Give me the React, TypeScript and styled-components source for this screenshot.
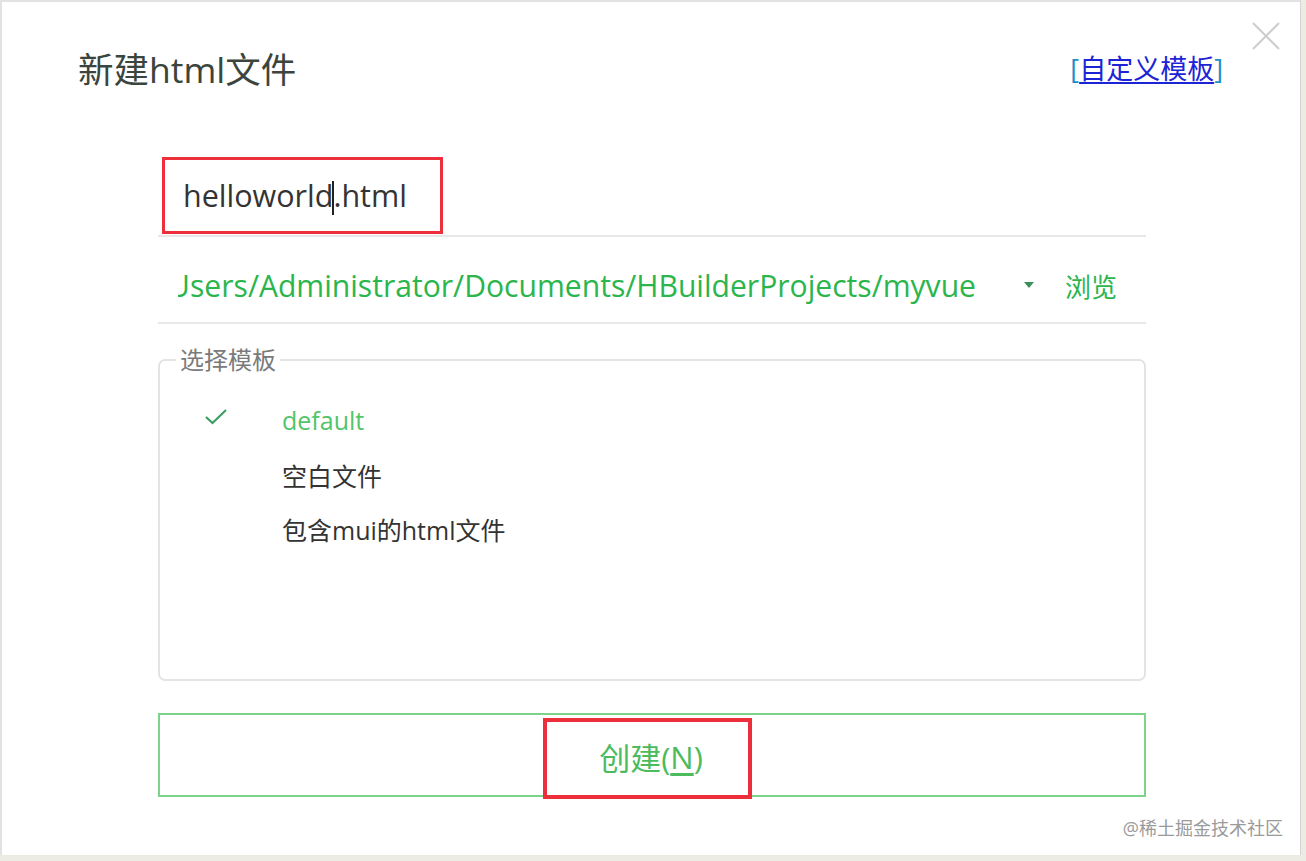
import styled, { createGlobalStyle } from 'styled-components'

const GlobalStyle = createGlobalStyle`
	html, body {
		margin: 0;
		padding: 0;
		background: #ecebe4;
	}
	body {
		font-family: "Open Sans", "Noto Sans CJK SC", sans-serif;
	}
`;

const templates = [
	{ name: 'default', selected: true },
	{ name: '空白文件', selected: false },
	{ name: '包含mui的html文件', selected: false },
]

const App = () => {

	return(
		<Page>
		<GlobalStyle />
		<Dialog>
			<CloseButton aria-label="close">
				<svg width="28" height="28" viewBox="0 0 28 28">
					<path d="M1 1 L27 27 M27 1 L1 27" stroke="#cdcdcd" strokeWidth="2" fill="none" />
				</svg>
			</CloseButton>
			<Header>
				<Title>新建html文件</Title>
				<CustomLink>
					<Bracket>[</Bracket><u>自定义模板</u><Bracket>]</Bracket>
				</CustomLink>
			</Header>
			<Form>
				<NameRow>
					<Highlight>
						helloworld<Caret />.html
					</Highlight>
				</NameRow>
				<PathRow>
					<PathClip>
						<PathText>C:/Users/Administrator/Documents/HBuilderProjects/myvue</PathText>
					</PathClip>
					<DropArrow />
					<Browse>浏览</Browse>
				</PathRow>
				<TemplateBox>
					<Legend>选择模板</Legend>
					<TemplateList>
						{templates.map((t) => (
							<TemplateItem key={t.name} $selected={t.selected}>
								<CheckSlot>
									{t.selected && (
										<svg width="24" height="18" viewBox="0 0 24 18">
											<path d="M2 9 L8.5 15 L22 2" stroke="#3d9f63" strokeWidth="2.2" fill="none" />
										</svg>
									)}
								</CheckSlot>
								{t.name}
							</TemplateItem>
						))}
					</TemplateList>
				</TemplateBox>
				<CreateButton type="button">
					<Highlight $thick>
						创建(<u>N</u>)
					</Highlight>
				</CreateButton>
			</Form>
			<Footer>@稀土掘金技术社区</Footer>
		</Dialog>
		</Page>
	)
}

export default App

const Page = styled.div`
	width: 1306px;
	height: 861px;
	overflow: hidden;
`;

const Dialog = styled.div`
	position: relative;
	box-sizing: border-box;
	width: 1301px;
	height: 855px;
	background: #ffffff;
	border-left: 2px solid #e2e2e2;
	border-top: 2px solid #e2e2e2;
	border-right: 1px solid #d4d4d4;
	display: flex;
	flex-direction: column;
`;

const CloseButton = styled.button`
	position: absolute;
	top: 20px;
	right: 20px;
	padding: 0;
	border: none;
	background: none;
	display: flex;
`;

const Header = styled.div`
	height: 130px;
	display: flex;
	align-items: center;
	justify-content: space-between;
	padding: 0 77px 0 76px;
`;

const Title = styled.h1`
	margin: 0;
	font-weight: 400;
	font-size: 35.5px;
	color: #3b443d;
`;

const CustomLink = styled.a`
	font-size: 27px;
	color: #1d24d6;
	cursor: pointer;
	u {
		text-underline-offset: 3px;
	}
`;

const Bracket = styled.span`
	color: #1d8fc8;
`;

const Form = styled.div`
	margin: 25px 154px 0 156px;
	display: flex;
	flex-direction: column;
`;

const NameRow = styled.div`
	height: 78px;
	border-bottom: 2px solid #e8e8e8;
	display: flex;
	align-items: flex-start;
	padding-left: 4px;
`;

const Highlight = styled.span<{ $thick?: boolean }>`
	box-sizing: border-box;
	display: inline-flex;
	align-items: center;
	border: ${(p) => (p.$thick ? '4px' : '3px')} solid #ec2f3b;
	height: ${(p) => (p.$thick ? '81px' : '77px')};
	padding: ${(p) => (p.$thick ? '0 45px 4px 52px' : '0 33px 2px 18px')};
	margin-right: ${(p) => (p.$thick ? '9px' : '0')};
	font-size: ${(p) => (p.$thick ? '31px' : '30.5px')};
	color: ${(p) => (p.$thick ? '#4cbb5e' : '#333333')};
	u {
		text-underline-offset: 4px;
	}
`;

const Caret = styled.span`
	display: inline-block;
	width: 2px;
	height: 34px;
	margin: 6px -1px 0 -1px;
	background: #222;
	vertical-align: middle;
`;

const PathRow = styled.div`
	box-sizing: border-box;
	height: 87px;
	padding-top: 12px;
	border-bottom: 2px solid #e8e8e8;
	display: flex;
	align-items: center;
	padding-left: 20px;
`;

const PathClip = styled.div`
	width: 798px;
	overflow: hidden;
	display: flex;
	justify-content: flex-end;
`;

const PathText = styled.span`
	white-space: nowrap;
	font-size: 30.1px;
	color: #2bb54d;
`;

const DropArrow = styled.span`
	margin-left: 48px;
	margin-top: -2px;
	width: 0;
	height: 0;
	border-left: 5px solid transparent;
	border-right: 5px solid transparent;
	border-top: 6px solid #3a8f5c;
`;

const Browse = styled.span`
	margin-left: 31px;
	font-size: 26px;
	color: #2bb54d;
`;

const TemplateBox = styled.fieldset`
	margin: 23px 0 0 0;
	padding: 0;
	height: 334px;
	box-sizing: border-box;
	border: 2px solid #e4e4e4;
	border-radius: 7px;
	min-width: 0;
`;

const Legend = styled.legend`
	margin-left: 16px;
	padding: 0 4px;
	font-size: 24px;
	line-height: 26px;
	color: #7a7a7a;
`;

const TemplateList = styled.div`
	display: flex;
	flex-direction: column;
	padding-top: 20px;
`;

const TemplateItem = styled.div<{ $selected: boolean }>`
	height: 54.5px;
	display: flex;
	align-items: center;
	font-size: 25px;
	color: ${(p) => (p.$selected ? '#52c46a' : '#333333')};
`;

const CheckSlot = styled.span`
	width: 122px;
	padding-left: 44px;
	box-sizing: border-box;
	display: flex;
	margin-top: -6px;
`;

const CreateButton = styled.button`
	margin-top: 32px;
	height: 84px;
	box-sizing: border-box;
	border: 2px solid #7dd38a;
	background: #ffffff;
	display: flex;
	justify-content: center;
	align-items: flex-start;
	padding: 3px 0 0 0;
	font-family: inherit;
	cursor: pointer;
`;

const Footer = styled.div`
	margin-top: 19px;
	display: flex;
	justify-content: flex-end;
	padding-right: 17px;
	font-size: 18px;
	line-height: 24px;
	color: #9a9a9a;
`;
